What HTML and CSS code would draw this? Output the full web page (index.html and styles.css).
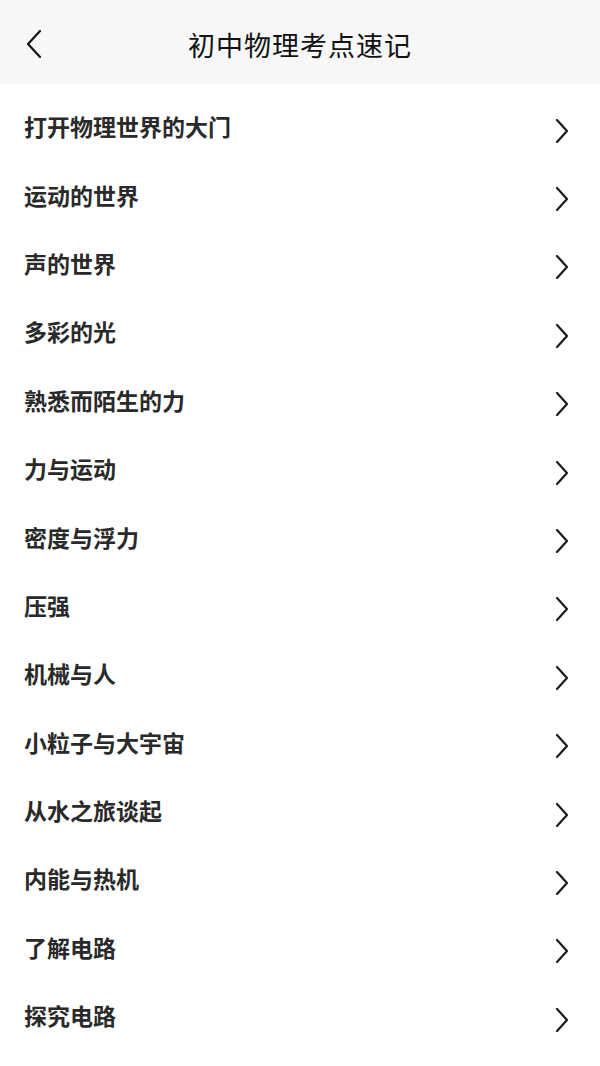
FILE: index.html
```html
<!DOCTYPE html>
<html>

<head>
  <title>初中物理考点速记</title>
  <link rel="stylesheet" href="styles.css">
</head>

<body>
  <div class="top-bar">
    <a class="back" href="#">
      <svg width="20" height="30" viewBox="0 0 20 30">
        <path d="M16 2 L4 15 L16 28" fill="none" stroke="#111" stroke-width="2.2" stroke-linecap="round" stroke-linejoin="round"/>
      </svg>
    </a>
    <h1>初中物理考点速记</h1>
  </div>

  <ul class="chapter-list">
    <li class="chapter-item"><span>打开物理世界的大门</span><svg class="arrow" viewBox="0 0 16 26"><path d="M3 2 L13 13 L3 24"/></svg></li>
    <li class="chapter-item"><span>运动的世界</span><svg class="arrow" viewBox="0 0 16 26"><path d="M3 2 L13 13 L3 24"/></svg></li>
    <li class="chapter-item"><span>声的世界</span><svg class="arrow" viewBox="0 0 16 26"><path d="M3 2 L13 13 L3 24"/></svg></li>
    <li class="chapter-item"><span>多彩的光</span><svg class="arrow" viewBox="0 0 16 26"><path d="M3 2 L13 13 L3 24"/></svg></li>
    <li class="chapter-item"><span>熟悉而陌生的力</span><svg class="arrow" viewBox="0 0 16 26"><path d="M3 2 L13 13 L3 24"/></svg></li>
    <li class="chapter-item"><span>力与运动</span><svg class="arrow" viewBox="0 0 16 26"><path d="M3 2 L13 13 L3 24"/></svg></li>
    <li class="chapter-item"><span>密度与浮力</span><svg class="arrow" viewBox="0 0 16 26"><path d="M3 2 L13 13 L3 24"/></svg></li>
    <li class="chapter-item"><span>压强</span><svg class="arrow" viewBox="0 0 16 26"><path d="M3 2 L13 13 L3 24"/></svg></li>
    <li class="chapter-item"><span>机械与人</span><svg class="arrow" viewBox="0 0 16 26"><path d="M3 2 L13 13 L3 24"/></svg></li>
    <li class="chapter-item"><span>小粒子与大宇宙</span><svg class="arrow" viewBox="0 0 16 26"><path d="M3 2 L13 13 L3 24"/></svg></li>
    <li class="chapter-item"><span>从水之旅谈起</span><svg class="arrow" viewBox="0 0 16 26"><path d="M3 2 L13 13 L3 24"/></svg></li>
    <li class="chapter-item"><span>内能与热机</span><svg class="arrow" viewBox="0 0 16 26"><path d="M3 2 L13 13 L3 24"/></svg></li>
    <li class="chapter-item"><span>了解电路</span><svg class="arrow" viewBox="0 0 16 26"><path d="M3 2 L13 13 L3 24"/></svg></li>
    <li class="chapter-item"><span>探究电路</span><svg class="arrow" viewBox="0 0 16 26"><path d="M3 2 L13 13 L3 24"/></svg></li>
  </ul>
</body>

</html>
```

FILE: styles.css
```css
body {
  margin: 0;
  font-family: "Noto Sans CJK SC", "Noto Sans", sans-serif;
  background-color: #fff;
  color: #222;
}

.top-bar {
  position: relative;
  height: 84px;
  background-color: #f7f7f7;
  display: flex;
  align-items: center;
  justify-content: center;
}

.back {
  position: absolute;
  left: 24px;
  top: 29px;
  display: block;
  width: 20px;
  height: 30px;
}

.back svg {
  display: block;
}

h1 {
  margin: 0;
  font-size: 27px;
  font-weight: 400;
  color: #111;
  letter-spacing: 1px;
  padding-top: 4px;
}

.chapter-list {
  list-style: none;
  margin: 0;
  padding: 8px 0 0 0;
}

.chapter-item {
  height: 68.4px;
  display: flex;
  align-items: center;
  justify-content: space-between;
  padding: 0 30px 0 24px;
  font-size: 23px;
  font-weight: 700;
  color: #2a2a2a;
}

.arrow {
  width: 16px;
  height: 26px;
  margin-top: 9px;
  fill: none;
  stroke: #1a1a1a;
  stroke-width: 2.2;
  stroke-linecap: round;
  stroke-linejoin: round;
}
```
